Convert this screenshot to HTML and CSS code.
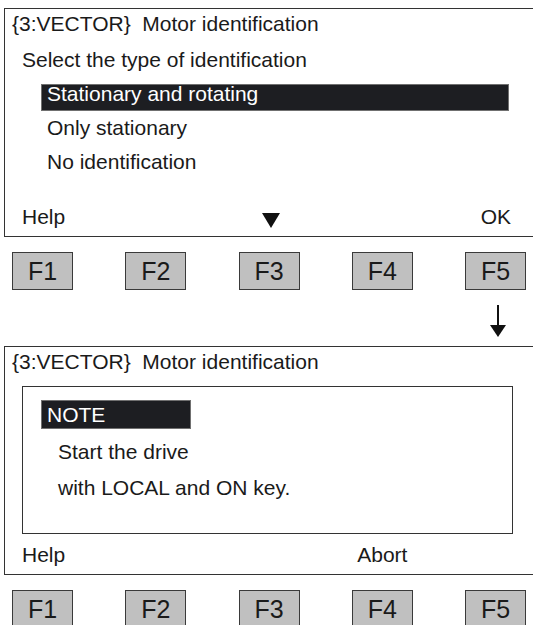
FILE: index.html
```html
<!DOCTYPE html>
<html lang="en">
<head>
    <meta charset="UTF-8">
    <title>Motor identification</title>
    <link rel="stylesheet" href="styles.css">
</head>
<body>
    <!-- Screen 1: select identification type -->
    <div class="screen">
        <div class="title">{3:VECTOR}&nbsp; Motor identification</div>
        <div class="prompt">Select the type of identification</div>
        <ul class="options">
            <li class="option selected">Stationary and rotating</li>
            <li class="option">Only stationary</li>
            <li class="option">No identification</li>
        </ul>
        <div class="softkeys">
            <span class="key-help">Help</span>
            <svg class="scroll-mark" width="18" height="15" viewBox="0 0 18 15">
                <polygon points="0,0 18,0 9,15" fill="#111"/>
            </svg>
            <span class="key-right">OK</span>
        </div>
    </div>

    <div class="fkeys">
        <div class="fkey">F1</div>
        <div class="fkey">F2</div>
        <div class="fkey">F3</div>
        <div class="fkey">F4</div>
        <div class="fkey">F5</div>
    </div>

    <!-- arrow under F5 -->
    <div class="step-arrow">
        <svg width="18" height="32" viewBox="0 0 18 32">
            <line x1="9" y1="0" x2="9" y2="22" stroke="#111" stroke-width="2"/>
            <polygon points="1,20 17,20 9,32" fill="#111"/>
        </svg>
    </div>

    <!-- Screen 2: note -->
    <div class="screen">
        <div class="title">{3:VECTOR}&nbsp; Motor identification</div>
        <div class="note-box">
            <div class="note-head">NOTE</div>
            <div class="note-line">Start the drive</div>
            <div class="note-line">with LOCAL and ON key.</div>
        </div>
        <div class="softkeys">
            <span class="key-help">Help</span>
            <span class="key-abort">Abort</span>
        </div>
    </div>

    <div class="fkeys">
        <div class="fkey">F1</div>
        <div class="fkey">F2</div>
        <div class="fkey">F3</div>
        <div class="fkey">F4</div>
        <div class="fkey">F5</div>
    </div>
</body>
</html>
```

FILE: styles.css
```css
/* page */
body {
    margin: 0;
    padding-top: 8px;
    background: #fff;
    color: #1a1a1a;
    font-family: "Liberation Sans", Arial, sans-serif;
    font-size: 21px;
    overflow: hidden;
}

/* display screen */
.screen {
    margin-left: 4px;
    border: 1px solid #333;
    border-right: none;
    display: flex;
    flex-direction: column;
    height: 229px;
    box-sizing: border-box;
}

.screen + .fkeys {
    margin-top: 15px;
}

.title {
    padding: 1px 0 0 7px;
    line-height: 28px;
}

.prompt {
    margin-top: 8px;
    padding-left: 17px;
    line-height: 28px;
}

/* option list */
.options {
    list-style: none;
    margin: 10px 0 0 36px;
    padding: 0;
}

.option {
    width: 468px;
    box-sizing: border-box;
    border: 1px solid transparent;
    padding: 0 0 7px 5px;
    line-height: 18px;
    margin-bottom: 7px;
}

.selected {
    background: #1d1e22;
    border-color: #707070;
    color: #fff;
}

/* soft key labels */
.softkeys {
    margin-top: auto;
    display: flex;
    align-items: center;
    padding: 0 0 5px 17px;
    line-height: 28px;
}

.scroll-mark {
    margin-left: 197px;
    margin-top: 6px;
}

.key-right {
    margin-left: auto;
    margin-right: 22px;
}

.key-abort {
    margin-left: 292px;
}

/* note box */
.note-box {
    margin: 10px 20px 0 17px;
    border: 1px solid #333;
    height: 148px;
    box-sizing: border-box;
}

.note-head {
    margin: 13px 0 5px 18px;
    width: 150px;
    box-sizing: border-box;
    border: 1px solid #707070;
    background: #1d1e22;
    color: #fff;
    padding-left: 5px;
    line-height: 27px;
}

.note-line {
    padding-left: 35px;
    line-height: 36px;
}

/* function keys */
.fkeys {
    display: flex;
    justify-content: space-between;
    padding: 0 7px 0 12px;
}

.fkey {
    width: 61px;
    height: 38px;
    box-sizing: border-box;
    border: 1px solid #3a3a3a;
    background: #c0c0c0;
    font-size: 25px;
    line-height: 36px;
    text-align: center;
}

.step-arrow {
    display: flex;
    justify-content: flex-end;
    padding-right: 26px;
    margin: 15px 0 9px;
    height: 32px;
}
```
